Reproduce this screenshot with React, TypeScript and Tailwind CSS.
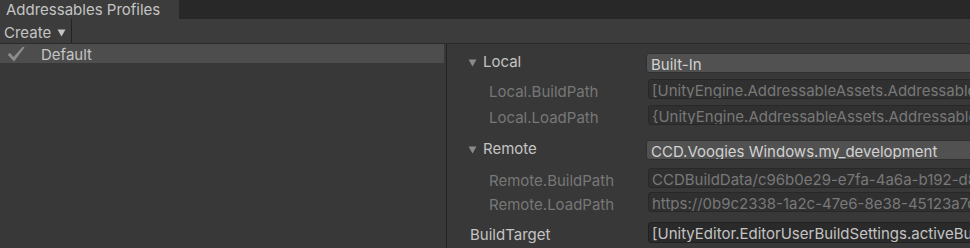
import { Fragment } from 'react'

type Group = {
  name: string
  value: string
  gap: string
  paths: { label: string; value: string; gap: string }[]
}

const groups: Group[] = [
  {
    name: 'Local',
    value: 'Built-In',
    gap: '',
    paths: [
      { label: 'Local.BuildPath', value: '[UnityEngine.AddressableAssets.Addressables.BuildPath]/[BuildTarget]', gap: 'mt-[6px]' },
      { label: 'Local.LoadPath', value: '{UnityEngine.AddressableAssets.Addressables.RuntimePath}/[BuildTarget]', gap: 'mt-[6px]' },
    ],
  },
  {
    name: 'Remote',
    value: 'CCD.Voogies Windows.my_development',
    gap: 'mt-[15px]',
    paths: [
      { label: 'Remote.BuildPath', value: 'CCDBuildData/c96b0e29-e7fa-4a6a-b192-d8a1e43f0c77', gap: 'mt-[8px]' },
      { label: 'Remote.LoadPath', value: 'https://0b9c2338-1a2c-47e6-8e38-45123a7d6b09', gap: 'mt-[4px]' },
    ],
  },
]

function Caret({ className = '' }: { className?: string }) {
  return (
    <svg width="9" height="8" viewBox="0 0 9 8" className={className}>
      <path d="M0.5 0.5 L8.5 0.5 L4.5 7.5 Z" fill="currentColor" />
    </svg>
  )
}

function Check() {
  return (
    <svg width="18" height="16" viewBox="0 0 18 16" className="text-[#8c8c8c]">
      <path d="M0.5 8.5 L3 7 L6.5 11 L16 0.5 L17.5 1.5 L7 15.5 Z" fill="currentColor" />
    </svg>
  )
}

export default function App() {
  return (
    <div
      className="w-[970px] h-[248px] overflow-hidden bg-[#383838] text-[15px] text-[#c4c4c4] flex flex-col"
      style={{ fontFamily: 'Inter, "Noto Sans", sans-serif' }}
    >
      {/* tab strip */}
      <div className="h-[19px] bg-[#282828] flex shrink-0">
        <div className="w-[179px] bg-[#3c3c3c] pl-[6px] leading-[19px]">Addressables Profiles</div>
      </div>

      {/* toolbar */}
      <div className="h-[25px] bg-[#3c3c3c] border-b border-[#2a2a2a] flex shrink-0">
        <div className="w-[72px] border-r border-[#232323] pl-[4px] pt-[4px] flex items-center gap-[6px]">
          <span>Create</span>
          <Caret className="text-[#c4c4c4] -mt-[1px]" />
        </div>
      </div>

      <div className="flex flex-1 min-h-0">
        {/* profile list */}
        <div className="w-[446px] shrink-0">
          <div className="h-[19px] w-[444px] bg-[#4d4d4d] flex items-center">
            <div className="w-[41px] pl-[7px] flex items-center">
              <Check />
            </div>
            <span className="pt-[3px]">Default</span>
          </div>
        </div>

        {/* profile values */}
        <div className="flex-1 border-l border-[#232323] pt-[9px] pl-[21px]">
          {groups.map((g) => (
            <Fragment key={g.name}>
              <div className={`flex h-[20px] ${g.gap}`}>
                <div className="w-[178px] flex items-center gap-[6px]">
                  <Caret className="text-[#8a8a8a] -mt-[1px]" />
                  <span className="-mt-[1px]">{g.name}</span>
                </div>
                <div className="flex-1 min-w-0 bg-[#515151] border border-[#303030] rounded-[3px] pl-[4px] pt-[4px] flex items-center whitespace-nowrap overflow-hidden text-[#d2d2d2]">
                  {g.value}
                </div>
              </div>
              {g.paths.map((p) => (
                <div key={p.label} className={`flex h-[20px] ${p.gap}`}>
                  <div className="w-[180px] pl-[21px] pt-[6px] flex items-center text-[#777777]">{p.label}</div>
                  <div className="flex-1 min-w-0 bg-[#303030] border border-[#282828] rounded-[3px] pl-[3px] pt-[4px] flex items-center whitespace-nowrap overflow-hidden text-[#787878]">
                    {p.value}
                  </div>
                </div>
              ))}
            </Fragment>
          ))}
          <div className="flex h-[21px] mt-[10px]">
            <div className="w-[180px] pl-[2px] pt-[6px] flex items-center">BuildTarget</div>
            <div className="flex-1 min-w-0 bg-[#2a2a2a] border border-[#212121] rounded-[3px] pl-[3px] pt-[4px] flex items-center whitespace-nowrap overflow-hidden">
              [UnityEditor.EditorUserBuildSettings.activeBuildTarget]
            </div>
          </div>
        </div>
      </div>
    </div>
  )
}
